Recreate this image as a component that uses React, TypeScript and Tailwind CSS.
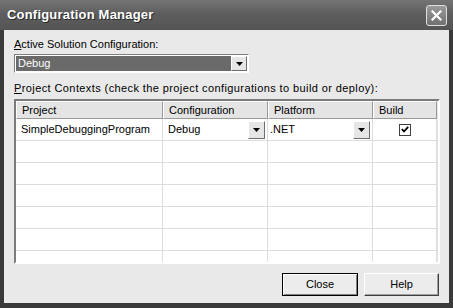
import React from 'react';

const font = { fontFamily: '"Liberation Sans", Arial, sans-serif' };

function Arrow() {
  return (
    <svg width="7" height="4" viewBox="0 0 7 4" className="block">
      <path d="M0 0h7L3.5 4z" fill="#000" />
    </svg>
  );
}

function DropButton({ className = '' }: { className?: string }) {
  return (
    <div
      className={`flex items-center justify-center bg-[#e6e6e6] border border-t-white border-l-white border-b-[#6e6e6e] border-r-[#6e6e6e] ${className}`}
    >
      <Arrow />
    </div>
  );
}

function HeaderCell({ children }: { children?: React.ReactNode }) {
  return (
    <div className="h-[18px] flex items-center px-[5px] bg-[#e4e4e4] border-l border-t border-l-white border-t-white border-r border-b border-r-[#9a9a9a] border-b-[#9a9a9a] text-[11px] text-black">
      {children}
    </div>
  );
}

function Cell({ children, className = '' }: { children?: React.ReactNode; className?: string }) {
  return (
    <div className={`h-[22px] bg-white border-r border-b border-[#dcdcdc] flex items-center text-[11px] ${className}`}>
      {children}
    </div>
  );
}

export default function App() {
  const emptyRows = [0, 1, 2, 3, 4, 5];

  return (
    <div className="w-[453px] h-[308px] bg-[#3a3a3a] flex flex-col overflow-hidden" style={font}>
      {/* title bar */}
      <div className="h-[30px] flex items-center justify-between pl-[7px] pr-[6px] bg-gradient-to-b from-[#747474] via-[#5c5c5c] to-[#555555]">
        <span className="text-white text-[13px] font-bold tracking-[0.2px] [text-shadow:1px_1px_0_#2a2a2a]">
          Configuration Manager
        </span>
        <div className="w-[21px] h-[21px] rounded-[3px] border border-[#e0e0e0] bg-gradient-to-b from-[#9a9a9a] to-[#707070] flex items-center justify-center">
          <svg width="11" height="11" viewBox="0 0 11 11">
            <path d="M1.5 1.5l8 8M9.5 1.5l-8 8" stroke="#fff" strokeWidth="2.2" strokeLinecap="square" />
          </svg>
        </div>
      </div>

      {/* body */}
      <div className="flex-1 mx-[4px] mb-[5px] bg-[#e9e9e9] pl-[10px] pr-[10px] pt-[6px] flex flex-col text-[11px] text-black">
        <div className="h-[16px] leading-[16px]">
          <span className="underline">A</span>ctive Solution Configuration:
        </div>
        <div className="mt-[2px] w-[235px] h-[19px] bg-white border border-t-[#808080] border-l-[#808080] border-b-white border-r-white flex p-[1px]">
          <div className="flex-1 bg-[#6a6a6a] text-white flex items-center pl-[2px] leading-none">Debug</div>
          <DropButton className="w-[16px]" />
        </div>

        <div className="mt-[7px] h-[16px] leading-[16px] tracking-[0.4px]">
          <span className="underline">P</span>roject Contexts (check the project configurations to build or deploy):
        </div>

        <div className="mt-[3px] w-[426px] h-[165px] border-2 border-t-[#7c7c7c] border-l-[#7c7c7c] border-r-white border-b-white bg-[#e4e4e4] overflow-hidden">
          <div className="grid grid-cols-[147px_105px_105px_64px]">
            <HeaderCell>Project</HeaderCell>
            <HeaderCell>Configuration</HeaderCell>
            <HeaderCell>Platform</HeaderCell>
            <HeaderCell>Build</HeaderCell>

            <Cell className="pl-[5px]">SimpleDebuggingProgram</Cell>
            <Cell className="pl-[5px] justify-between pr-[2px]">
              <span>Debug</span>
              <DropButton className="w-[17px] h-[18px]" />
            </Cell>
            <Cell className="pl-[2px] justify-between pr-[2px]">
              <span>.NET</span>
              <DropButton className="w-[17px] h-[18px]" />
            </Cell>
            <Cell className="justify-center">
              <div className="w-[12px] h-[12px] bg-white border border-[#404040] flex items-center justify-center">
                <svg width="8" height="7" viewBox="0 0 8 7">
                  <path d="M0.8 3.2l2.2 2.3L7.2 0.8" stroke="#000" strokeWidth="1.8" fill="none" />
                </svg>
              </div>
            </Cell>

            {emptyRows.map((r) => (
              <React.Fragment key={r}>
                <Cell />
                <Cell />
                <Cell />
                <Cell />
              </React.Fragment>
            ))}
          </div>
        </div>

        <div className="mt-[9px] flex justify-end gap-[6px]">
          <button className="w-[76px] h-[23px] border border-black bg-[#ececec] text-[11px] flex items-center justify-center shadow-[inset_1px_1px_0_#fff,inset_-1px_-1px_0_#808080]">
            Close
          </button>
          <button className="w-[75px] h-[23px] bg-[#ececec] text-[11px] flex items-center justify-center border border-t-white border-l-white border-b-[#404040] border-r-[#404040] shadow-[inset_-1px_-1px_0_#a0a0a0]">
            Help
          </button>
        </div>
      </div>
    </div>
  );
}
